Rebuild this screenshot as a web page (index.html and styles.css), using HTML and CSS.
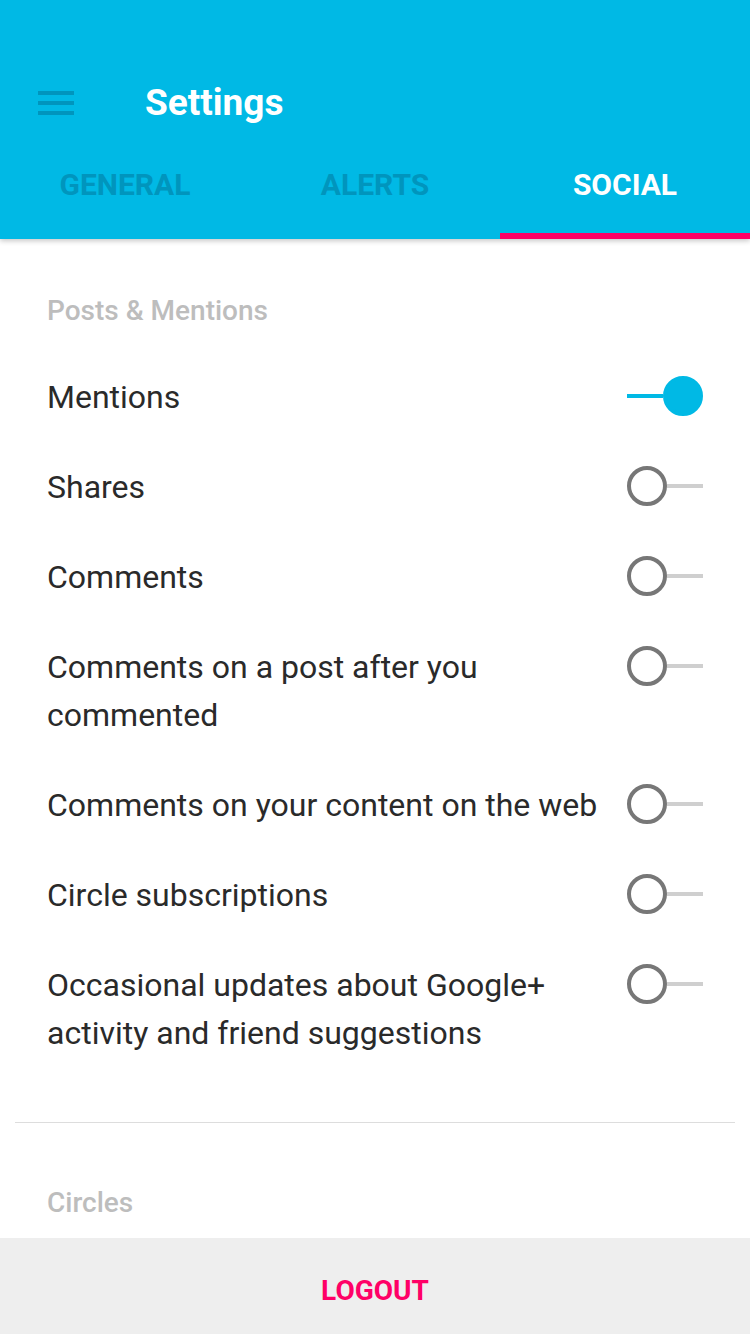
FILE: index.html
```html
<!DOCTYPE html>
<html lang="en">
<head>
<meta charset="utf-8">
<title>Settings</title>
<link rel="stylesheet" href="styles.css">
</head>
<body>
<div class="app">
  <header class="appbar">
    <div class="toolbar">
      <svg class="menu" width="36" height="24" viewBox="0 0 36 24" aria-hidden="true">
        <rect x="0" y="0" width="36" height="4"/>
        <rect x="0" y="10" width="36" height="4"/>
        <rect x="0" y="20" width="36" height="4"/>
      </svg>
      <h1 class="title">Settings</h1>
    </div>
    <nav class="tabs">
      <div class="tab">GENERAL</div>
      <div class="tab">ALERTS</div>
      <div class="tab tab-active">SOCIAL</div>
    </nav>
  </header>

  <main class="content">
    <section class="section section-first">
      <h2 class="section-title">Posts &amp; Mentions</h2>
      <div class="row">
        <span class="label">Mentions</span>
        <span class="toggle toggle-on"><span class="track"></span><span class="knob"></span></span>
      </div>
      <div class="row">
        <span class="label">Shares</span>
        <span class="toggle"><span class="knob"></span><span class="track"></span></span>
      </div>
      <div class="row">
        <span class="label">Comments</span>
        <span class="toggle"><span class="knob"></span><span class="track"></span></span>
      </div>
      <div class="row">
        <span class="label">Comments on a post after you commented</span>
        <span class="toggle"><span class="knob"></span><span class="track"></span></span>
      </div>
      <div class="row">
        <span class="label">Comments on your content on the web</span>
        <span class="toggle"><span class="knob"></span><span class="track"></span></span>
      </div>
      <div class="row">
        <span class="label">Circle subscriptions</span>
        <span class="toggle"><span class="knob"></span><span class="track"></span></span>
      </div>
      <div class="row">
        <span class="label">Occasional updates about Google+ activity and friend suggestions</span>
        <span class="toggle"><span class="knob"></span><span class="track"></span></span>
      </div>
    </section>
    <hr class="divider">
    <section class="section section-second">
      <h2 class="section-title">Circles</h2>
    </section>
  </main>

  <footer class="footer">
    <button class="logout" type="button">LOGOUT</button>
  </footer>
</div>
</body>
</html>
```

FILE: styles.css
```css
* { box-sizing: border-box; }

html, body {
  margin: 0;
  padding: 0;
}

body {
  font-family: Roboto, "Liberation Sans", Arial, sans-serif;
  color: #2a2a2a;
  background: #ffffff;
}

.app {
  width: 750px;
  height: 1334px;
  display: flex;
  flex-direction: column;
  overflow: hidden;
}

.appbar {
  flex: none;
  background: #00b9e5;
  box-shadow: 0 2px 5px rgba(0, 0, 0, 0.22);
  position: relative;
  z-index: 2;
}

.toolbar {
  height: 142px;
  padding-top: 64px;
  display: flex;
  align-items: flex-start;
}

.menu {
  margin: 27px 0 0 38px;
  fill: #0095bd;
  flex: none;
}

.title {
  margin: 0 0 0 71px;
  font-size: 37px;
  line-height: 78px;
  height: 78px;
  font-weight: 700;
  color: #ffffff;
}

.tabs {
  display: flex;
  height: 97px;
}

.tab {
  flex: 1;
  text-align: center;
  padding-top: 28px;
  font-size: 30px;
  line-height: 30px;
  font-weight: 700;
  color: #0095bd;
  border-bottom: 6px solid transparent;
}

.tab-active {
  color: #ffffff;
  border-bottom-color: #ff0066;
}

.content {
  flex: 1;
  overflow: hidden;
}

.section-first {
  padding: 48px 0 44px;
}

.section-second {
  padding: 56px 0 0;
}

.section-title {
  margin: 0;
  padding-left: 47px;
  font-size: 28px;
  line-height: 48px;
  font-weight: 500;
  color: #bdbdbd;
}

.section-first .section-title {
  margin-bottom: 17px;
}

.row {
  display: flex;
  align-items: flex-start;
  justify-content: space-between;
  padding: 21px 47px 21px 47px;
  gap: 24px;
}

.label {
  font-size: 32px;
  line-height: 48px;
  color: #2a2a2a;
  flex: 1;
}

.toggle {
  flex: none;
  width: 76px;
  height: 40px;
  margin-top: 3px;
  display: flex;
  align-items: center;
}

.knob {
  flex: none;
  width: 40px;
  height: 40px;
  border-radius: 50%;
  border: 4px solid #777777;
  background: #ffffff;
}

.track {
  flex: 1;
  height: 4px;
  background: #cfcfcf;
}

.toggle-on .knob {
  border-color: #00b9e5;
  background: #00b9e5;
}

.toggle-on .track {
  background: #00b9e5;
}

.divider {
  margin: 0 15px;
  border: none;
  border-top: 1px solid #dddddd;
  height: 0;
}

.footer {
  flex: none;
  height: 96px;
  padding-top: 9px;
  background: #eeeeee;
  display: flex;
  align-items: center;
  justify-content: center;
}

.logout {
  border: none;
  background: transparent;
  font-family: Roboto, "Liberation Sans", Arial, sans-serif;
  font-size: 28px;
  font-weight: 700;
  color: #ff0066;
  padding: 0;
  line-height: 40px;
}
```
